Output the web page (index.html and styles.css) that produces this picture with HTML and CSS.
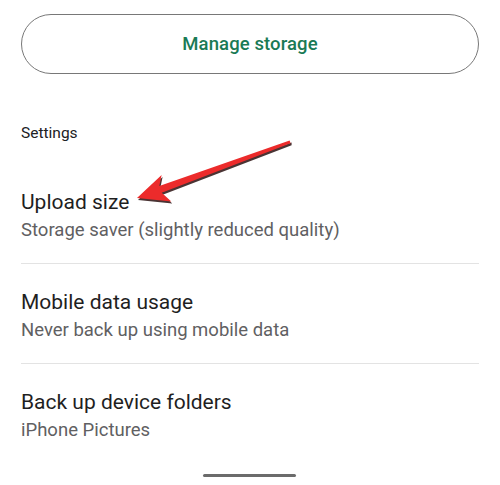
FILE: index.html
```html
<!DOCTYPE html>
<html>
<head>
<meta charset="utf-8">
<link rel="stylesheet" href="styles.css">
</head>
<body>
<div class="page">
  <div class="btn-wrap">
    <div class="btn">Manage storage</div>
  </div>
  <div class="section">Settings</div>
  <div class="row">
    <div class="title">Upload size</div>
    <div class="sub">Storage saver (slightly reduced quality)</div>
  </div>
  <div class="row">
    <div class="title">Mobile data usage</div>
    <div class="sub">Never back up using mobile data</div>
  </div>
  <div class="row last">
    <div class="title">Back up device folders</div>
    <div class="sub">iPhone Pictures</div>
  </div>
  <div class="home-bar"></div>
  <svg class="arrow" width="500" height="485" viewBox="0 0 500 485">
    <polygon points="138,200 162.6,177.1 160.3,188.1 291.6,142.5 291.6,145.3 162.7,194.7 172.3,203.4" fill="#2a1010" opacity="0.85"/>
    <polygon points="137,198 161.6,175.1 159.3,186.1 289.6,140.5 290.6,143.3 161.7,192.7 171.3,201.4" fill="#ec2b2b"/>
  </svg>
</div>
</body>
</html>
```
FILE: styles.css
```css
html, body {
  margin: 0;
  padding: 0;
  background: #ffffff;
}
.page {
  position: relative;
  width: 500px;
  height: 485px;
  overflow: hidden;
  font-family: Roboto, "Noto Sans", sans-serif;
}
.btn-wrap {
  padding: 14px 21px 0 21px;
}
.btn {
  height: 58px;
  border: 1.5px solid #787878;
  border-radius: 31px;
  display: flex;
  align-items: center;
  justify-content: center;
  color: #1a7a55;
  font-size: 18.5px;
  font-weight: 500;
  letter-spacing: 0.1px;
}
.section {
  margin-top: 50px;
  margin-bottom: 22px;
  padding-left: 21px;
  font-size: 15.5px;
  line-height: 18px;
  color: #202124;
}
.row {
  margin: 0 21px;
  padding: 24px 0 22px 0;
  border-bottom: 1px solid #e3e3e3;
}
.row.last {
  border-bottom: none;
}
.title {
  font-size: 21px;
  line-height: 28px;
  color: #1f1f1f;
}
.sub {
  margin-top: 3px;
  font-size: 18.5px;
  line-height: 22px;
  color: #5f6062;
}
.home-bar {
  position: absolute;
  left: 203px;
  top: 474px;
  width: 93px;
  height: 3px;
  border-radius: 2px;
  background: #6b6b6b;
}
.arrow {
  position: absolute;
  left: 0;
  top: 0;
}
```
